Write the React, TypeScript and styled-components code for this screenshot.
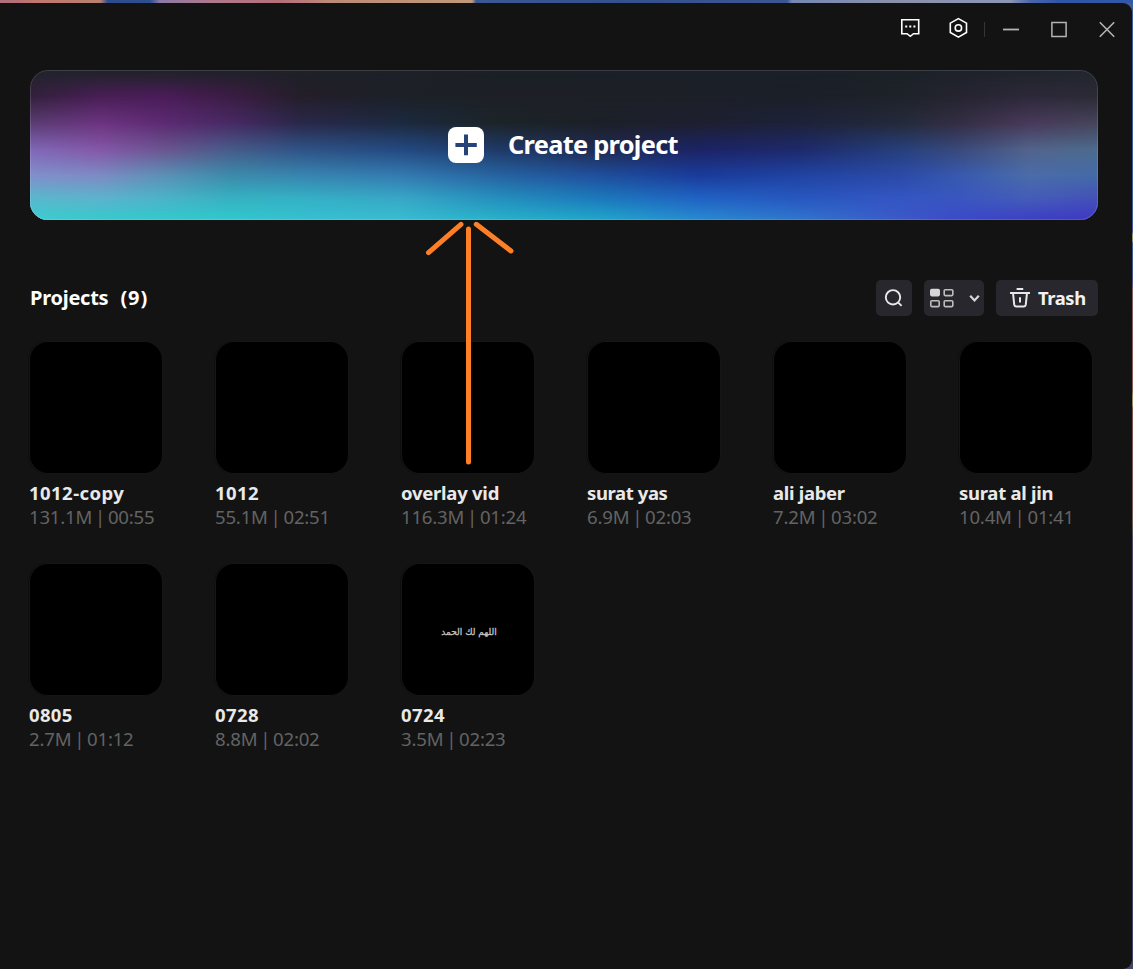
import React from "react";
import styled, { createGlobalStyle } from "styled-components";

const GlobalStyle = createGlobalStyle`
  * { box-sizing: border-box; }
  html, body { margin: 0; padding: 0; background: #4a5a8c; }
  body { overflow: hidden; }
  button { border: 0; padding: 0; margin: 0; font: inherit; color: inherit; background: none; }
  svg { display: block; flex: none; }
`;

const Desktop = styled.div`
  position: relative;
  width: 1133px;
  height: 969px;
  padding: 3px 1px 0 0;
  overflow: hidden;
  font-family: "Noto Sans", "Open Sans", sans-serif;
  background:
    linear-gradient(90deg, #ad6f7c 0, #c0776f 40px, #b9806f 100px, #2d4c8e 108px, #2f4e90 150px,
      #8b7ba4 160px, #b0788c 215px, #b5707a 280px, #bd8a78 330px, #c09a78 472px, #3b5794 476px,
      #35508f 620px, #3c5694 787px, #7587b3 792px, #8990ab 890px, #8d97b4 1010px, #4b66ab 1030px,
      #2f55a8 1060px, #3358a8 1133px) 0 0 / 100% 3px no-repeat,
    linear-gradient(180deg, #3f5c9c 0, #405d98 232px, #8f9470 234px, #8f9470 241px, #405d98 243px,
      #465784 283px, #7f6262 290px, #855a56 390px, #8a8a64 397px, #8a8a64 405px, #7c5450 408px,
      #735c5a 520px, #4c4c68 540px, #45456a 969px);
`;

const Window = styled.main`
  display: flex;
  flex-direction: column;
  height: 966px;
  background: #131313;
  border-radius: 0 9px 9px 0;
`;

const TitleBar = styled.header`
  display: flex;
  justify-content: flex-end;
  height: 67px;
  padding: 2px 1px 0 0;
`;

const TitleButton = styled.button<{ $tone?: string }>`
  display: flex;
  align-items: center;
  justify-content: center;
  width: 48px;
  height: 48px;
  color: ${(p) => p.$tone ?? "#b4b4b4"};
`;

const TitleDivider = styled.i`
  width: 1px;
  height: 15px;
  margin: 17px 2px 0 1px;
  background: #353535;
`;

const Banner = styled.button`
  display: grid;
  flex: none;
  width: 1068px;
  height: 150px;
  margin-left: 30px;
  border-radius: 18px;
  overflow: hidden;
`;

const GlowRow = styled.span<{ $colors: string; $from: number; $to: number }>`
  grid-area: 1 / 1;
  background: linear-gradient(90deg, ${(p) => p.$colors});
  mask-image: linear-gradient(180deg, transparent ${(p) => p.$from}px, #000 ${(p) => p.$to}px);
`;

const BannerEdge = styled.span`
  grid-area: 1 / 1;
  z-index: 1;
  border: 1px solid rgba(255, 255, 255, 0.13);
  border-radius: 18px;
`;

const BannerContent = styled.span`
  grid-area: 1 / 1;
  z-index: 1;
  display: flex;
  align-items: center;
  gap: 24px;
  padding-left: 418px;
`;

const BannerLabel = styled.span`
  margin-top: -2px;
  color: #fff;
  font-size: 25.4px;
  font-weight: 700;
  letter-spacing: -0.72px;
  line-height: 36px;
  white-space: nowrap;
`;

const ProjectsBar = styled.section`
  display: flex;
  align-items: center;
  height: 36px;
  margin: 60px 34px 0 30px;
`;

const Heading = styled.h1`
  display: flex;
  gap: 12px;
  margin: 0 auto 0 0;
  color: #fff;
  font-size: 20px;
  font-weight: 700;
  letter-spacing: -0.25px;
  line-height: 36px;
`;

const Count = styled.span`
  letter-spacing: 0.9px;
`;

const ToolButton = styled.button<{ $width: number; $inset?: number }>`
  display: flex;
  align-items: center;
  width: ${(p) => p.$width}px;
  height: 36px;
  margin-left: 12px;
  padding-left: ${(p) => p.$inset ?? 0}px;
  border-radius: 5px;
  background: #28272d;
  color: #e8e8e8;
`;

const TrashLabel = styled.span`
  margin-left: 7px;
  color: #f2f2f2;
  font-size: 18.4px;
  font-weight: 700;
  letter-spacing: -0.4px;
  line-height: 36px;
`;

const Grid = styled.section`
  display: grid;
  grid-template-columns: repeat(6, 132px);
  column-gap: 54px;
  grid-auto-rows: 222px;
  margin: 26px 0 0 30px;
`;

const Card = styled.article`
  display: flex;
  flex-direction: column;
`;

const Thumb = styled.div`
  display: flex;
  align-items: center;
  justify-content: center;
  height: 131px;
  border-radius: 18px;
  background: #000;
  box-shadow: 0 0 0 1px #161616, -1px 0 0 1px #0e0e0e;
`;

const Caption = styled.span`
  margin: 4px 0 0 2px;
  color: #c4c4c4;
  font-family: "DejaVu Sans", sans-serif;
  font-size: 9px;
  line-height: 12px;
  white-space: nowrap;
  -webkit-text-stroke: 0.3px #c4c4c4;
`;

const Name = styled.div<{ $tracking: number }>`
  margin: 8px 0 0 -1px;
  color: #e9e9e9;
  font-size: 18.5px;
  font-weight: 700;
  letter-spacing: ${(p) => p.$tracking}px;
  line-height: 24px;
  white-space: nowrap;
`;

const Meta = styled.div`
  margin-left: -1px;
  color: #636363;
  font-size: 18.6px;
  line-height: 24px;
  letter-spacing: -0.2px;
  word-spacing: -1.8px;
  white-space: nowrap;
`;

const ArrowOverlay = styled.svg`
  position: absolute;
  left: 420px;
  top: 216px;
  pointer-events: none;
`;

const glowStops = [0, 70, 135, 200, 270, 370, 470, 570, 670, 770, 870, 930, 1000, 1068];
const glowRows: { y: number; colors: string[] }[] = [
  { y: 2, colors: ["#22232c", "#21222b", "#21222b", "#20212a", "#1f2028", "#1e2028", "#1b1f27", "#1b1f27", "#1b1f28", "#1b1f27", "#1c2128", "#1e222a", "#20242c", "#22262e"] },
  { y: 26, colors: ["#33203c", "#481e55", "#4a1c58", "#3c1c44", "#241e2a", "#1c2028", "#1d2026", "#1d2027", "#1c2028", "#1b1f28", "#1e222a", "#252430", "#2e283a", "#2c2a36"] },
  { y: 53, colors: ["#5a3c72", "#6c3480", "#5c2a72", "#482a64", "#2a284a", "#1c2a40", "#1c2428", "#1c2028", "#1e1f30", "#1d223a", "#242a3a", "#342e44", "#483a5a", "#46445a"] },
  { y: 80, colors: ["#8068b8", "#8458a8", "#6a5690", "#475c8a", "#305488", "#244a82", "#1f3a68", "#202a52", "#1c2466", "#1e2a6c", "#26407c", "#3a4a7c", "#52648c", "#4c6c8e"] },
  { y: 106, colors: ["#8090cc", "#7c8cc4", "#5a92b6", "#3c8cac", "#3886b0", "#347cb2", "#2664a2", "#1f509e", "#1a3c9c", "#2044a4", "#2c4aa8", "#385ab0", "#4a6caa", "#446aa8"] },
  { y: 129, colors: ["#58b8cc", "#5cb4cc", "#4ab4c8", "#36b2c2", "#34b2c6", "#38a8c6", "#2490be", "#1c7abc", "#2064c4", "#2858c0", "#3456c4", "#3a56c0", "#445cb8", "#4450b8"] },
  { y: 149, colors: ["#3ccccf", "#38c8cc", "#34c8cc", "#30c8cc", "#36c0d0", "#38bcd0", "#28b0c8", "#20a4c8", "#2888d0", "#3074cc", "#3c58c8", "#3c4ac8", "#3c40c4", "#4038c4"] },
];

const projects = [
  { name: "1012-copy", meta: "131.1M | 00:55", tracking: 0.45 },
  { name: "1012", meta: "55.1M | 02:51", tracking: 0.4 },
  { name: "overlay vid", meta: "116.3M | 01:24", tracking: -0.25 },
  { name: "surat yas", meta: "6.9M | 02:03", tracking: -0.4 },
  { name: "ali jaber", meta: "7.2M | 03:02", tracking: -0.3 },
  { name: "surat al jin", meta: "10.4M | 01:41", tracking: -0.28 },
  { name: "0805", meta: "2.7M | 01:12", tracking: 0.35 },
  { name: "0728", meta: "8.8M | 02:02", tracking: 0.4 },
  { name: "0724", meta: "3.5M | 02:23", tracking: 0.4, caption: "اللهم لك الحمد" },
];

const FeedbackIcon = () => (
  <svg width="24" height="24" viewBox="0 0 24 24" fill="none" stroke="currentColor" strokeWidth="1.6">
    <path d="M2.8 2.8h16.9v13.9h-5.2l-3.2 2.6-3.3-2.6H2.8z" />
    <path d="M6.2 9.5h2M10.3 9.5h2M14.4 9.5h2" strokeWidth="2" />
  </svg>
);

const SettingsIcon = () => (
  <svg width="24" height="24" viewBox="0 0 24 24" fill="none" stroke="currentColor" strokeWidth="1.6">
    <path d="M11.4 1.6l8.1 4.5v9.4l-8.1 4.6-8.1-4.6V6.1z" />
    <circle cx="11.4" cy="10.9" r="3.2" />
  </svg>
);

const MinimizeIcon = () => (
  <svg width="24" height="24" viewBox="0 0 24 24" fill="none" stroke="currentColor" strokeWidth="1.8">
    <path d="M4 12.5h16" />
  </svg>
);

const MaximizeIcon = () => (
  <svg width="24" height="24" viewBox="0 0 24 24" fill="none" stroke="currentColor" strokeWidth="1.5">
    <path d="M4.9 5.4h14.2v14.2H4.9z" />
  </svg>
);

const CloseIcon = () => (
  <svg width="24" height="24" viewBox="0 0 24 24" fill="none" stroke="currentColor" strokeWidth="1.6">
    <path d="M4.8 5.3l14.4 14.4M19.2 5.3L4.8 19.7" />
  </svg>
);

const PlusIcon = () => (
  <svg width="36" height="36" viewBox="0 0 36 36">
    <rect width="36" height="36" rx="8" fill="#fff" />
    <path d="M18 7.4v20.8M7.4 18h21.4" stroke="#234379" strokeWidth="4" />
  </svg>
);

const SearchIcon = () => (
  <svg width="36" height="36" viewBox="0 0 36 36" fill="none" stroke="currentColor" strokeWidth="1.9">
    <circle cx="17" cy="17.3" r="7.2" />
    <path d="M22 22.3l3.6 3.6" />
  </svg>
);

const ViewIcon = () => (
  <svg width="60" height="36" viewBox="0 0 60 36" fill="none" stroke="#bdbdbd" strokeWidth="1.6">
    <rect x="6.8" y="9.6" width="8.4" height="6" rx="1" fill="#d6d6d6" stroke="#d6d6d6" />
    <rect x="20.2" y="9.8" width="8.6" height="5.8" rx="1" />
    <rect x="6.8" y="20.8" width="8.4" height="5.8" rx="1" />
    <rect x="20.2" y="20.8" width="8.6" height="5.8" rx="1" />
    <path d="M46.2 15.8l4.3 4.6 4.3-4.6" stroke="#d8d8d8" strokeWidth="2.2" />
  </svg>
);

const TrashIcon = () => (
  <svg width="22" height="22" viewBox="0 0 22 22" fill="none" stroke="currentColor" strokeWidth="2">
    <path d="M1 6h20M7.6 2h6.6M4 6l1.2 11.4c.2 1.5.8 2.2 2.2 2.2h7.2c1.4 0 2-.7 2.2-2.2L18 6M11 10.2v5.4" />
  </svg>
);

export default function App() {
  return (
    <>
      <GlobalStyle />
      <Desktop>
        <Window>
          <TitleBar>
            <TitleButton $tone="#fff" aria-label="Feedback"><FeedbackIcon /></TitleButton>
            <TitleButton $tone="#fff" aria-label="Settings"><SettingsIcon /></TitleButton>
            <TitleDivider />
            <TitleButton aria-label="Minimize"><MinimizeIcon /></TitleButton>
            <TitleButton aria-label="Maximize"><MaximizeIcon /></TitleButton>
            <TitleButton aria-label="Close"><CloseIcon /></TitleButton>
          </TitleBar>

          <Banner>
            {glowRows.map((row, i) => (
              <GlowRow
                key={row.y}
                $colors={row.colors.map((c, k) => `${c} ${glowStops[k]}px`).join(", ")}
                $from={i === 0 ? -2 : glowRows[i - 1].y}
                $to={i === 0 ? -1 : row.y}
              />
            ))}
            <BannerEdge />
            <BannerContent>
              <PlusIcon />
              <BannerLabel>Create project</BannerLabel>
            </BannerContent>
          </Banner>

          <ProjectsBar>
            <Heading><span>Projects</span><Count>(9)</Count></Heading>
            <ToolButton $width={36} aria-label="Search"><SearchIcon /></ToolButton>
            <ToolButton $width={60} aria-label="View"><ViewIcon /></ToolButton>
            <ToolButton $width={102} $inset={13}>
              <TrashIcon />
              <TrashLabel>Trash</TrashLabel>
            </ToolButton>
          </ProjectsBar>

          <Grid>
            {projects.map((p) => (
              <Card key={p.name}>
                <Thumb>{p.caption && <Caption dir="rtl">{p.caption}</Caption>}</Thumb>
                <Name $tracking={p.tracking}>{p.name}</Name>
                <Meta>{p.meta}</Meta>
              </Card>
            ))}
          </Grid>
        </Window>

        <ArrowOverlay width="100" height="252" viewBox="420 216 100 252" fill="none" stroke="#ff7f27" strokeWidth="5" strokeLinecap="round">
          <path d="M468.5 229v233M461 224.3l-32.5 28.4M476.3 224.3l34.7 26.6" />
        </ArrowOverlay>
      </Desktop>
    </>
  );
}
